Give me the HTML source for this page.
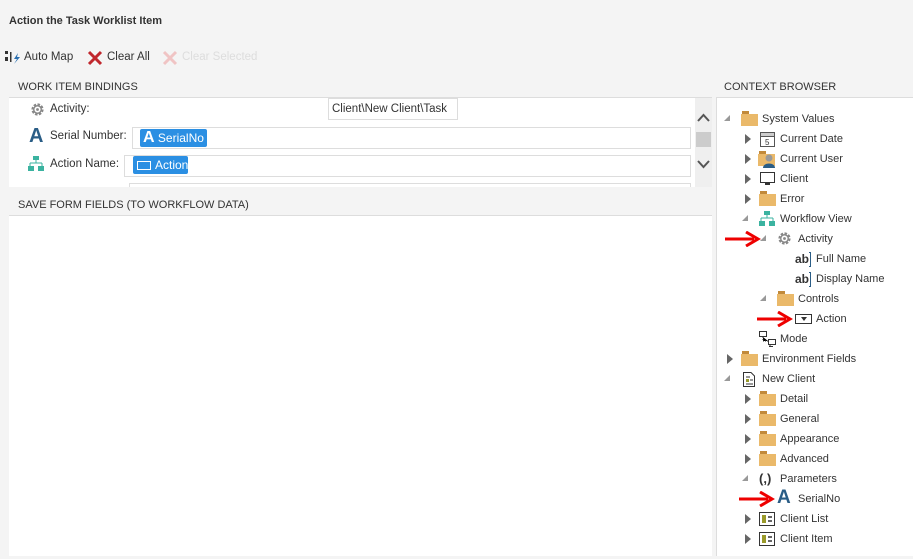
<!DOCTYPE html><html><head><style>
body{margin:0;width:913px;height:559px;background:#f4f4f4;font-family:"Liberation Sans",sans-serif;font-size:11px;color:#333;position:relative;overflow:hidden}
.a{position:absolute;white-space:nowrap}
.hd{font-size:11px;color:#333}
.row{position:absolute;height:20px;line-height:20px;white-space:nowrap;margin-top:1px}
.tri{position:absolute;width:0;height:0}
.tr{border-left:6px solid #666;border-top:5px solid transparent;border-bottom:5px solid transparent;top:5px}
.td{border-right:6px solid #999;border-top:6px solid transparent;top:6px}
.fold{position:absolute;top:2px;width:17px;height:15px}
.fold:before{content:"";position:absolute;left:1px;top:0;width:7px;height:3px;background:#c28a3a}
.fold:after{content:"";position:absolute;left:0;top:3px;width:17px;height:12px;background:#eab96a}
.box{position:absolute;background:#fff;border:1px solid #ddd}
.tag{position:absolute;background:#2b8fe3;color:#fff;border-radius:2px;height:18px;line-height:18px;font-size:12px}
</style></head><body>
<div class="a" style="left:9px;top:15px;font-weight:bold;font-size:11px;color:#333">Action the Task Worklist Item</div>
<svg class="a" style="left:5px;top:51px" width="16" height="14"><rect x="0" y="0" width="3" height="3" fill="#333"/><rect x="0" y="6" width="3" height="4" fill="#333"/><rect x="5" y="1" width="1.5" height="10" fill="#333"/><path d="M13 2 L9 8 L12 8 L9 13 L15 6 L12 6Z" fill="#2a6fb0"/></svg>
<div class="a" style="left:24px;top:51px;font-size:11.5px">Auto Map</div>
<svg class="a" style="left:87px;top:50px" width="16" height="16"><path d="M2 2L14 14M14 2L2 14" stroke="#c0272d" stroke-width="3"/></svg>
<div class="a" style="left:107px;top:51px;font-size:11.5px">Clear All</div>
<svg class="a" style="left:162px;top:50px" width="16" height="16"><path d="M2 2L14 14M14 2L2 14" stroke="#f0c4c4" stroke-width="3"/></svg>
<div class="a" style="left:182px;top:51px;font-size:11.5px;color:#ddd">Clear Selected</div>
<div class="a hd" style="left:18px;top:81px">WORK ITEM BINDINGS</div>
<div class="a hd" style="left:18px;top:199px">SAVE FORM FIELDS (TO WORKFLOW DATA)</div>
<div class="a hd" style="left:724px;top:81px">CONTEXT BROWSER</div>
<div class="a" style="left:9px;top:97px;width:703px;height:89px;background:#fff;border-top:1px solid #ddd;overflow:hidden">
 <svg class="a" style="left:21px;top:4px" width="15" height="15" viewBox="0 0 16 16"><circle cx="8" cy="8" r="5" fill="none" stroke="#888" stroke-width="3" stroke-dasharray="2.5 1.4"/><circle cx="8" cy="8" r="4" fill="none" stroke="#888" stroke-width="1.5"/><circle cx="8" cy="8" r="1.5" fill="#888"/></svg>
 <div class="a" style="left:41px;top:5px;font-size:11.5px">Activity:</div>
 <div class="box" style="left:319px;top:0;width:125px;height:20px;line-height:20px;padding-left:3px;font-size:11.5px">Client\New Client\Task</div>
 <div class="a" style="left:20px;top:27px;font-size:20px;font-weight:bold;color:#2a5d86">A</div>
 <div class="a" style="left:41px;top:32px;font-size:11.5px">Serial Number:</div>
 <div class="box" style="left:123px;top:29px;width:557px;height:20px"></div>
 <div class="tag" style="left:131px;top:31px;width:67px"><b style="font-size:16px;margin-left:3px">A</b> SerialNo</div>
 <svg class="a" style="left:19px;top:58px" width="16" height="16"><rect x="5" y="0" width="6" height="4" fill="#3bb3a0"/><path d="M8 4V7M2 7H14M2 7V10M14 7V10" stroke="#3bb3a0"/><rect x="0" y="10" width="6" height="5" fill="#3bb3a0"/><rect x="10" y="10" width="6" height="5" fill="#3bb3a0"/></svg>
 <div class="a" style="left:41px;top:60px;font-size:11.5px">Action Name:</div>
 <div class="box" style="left:115px;top:57px;width:565px;height:20px"></div>
 <div class="tag" style="left:124px;top:58px;width:55px"><span style="display:inline-block;width:12px;height:7px;border:1px solid #fff;margin:0 4px 0 4px;vertical-align:-1px"></span>Action</div>
 <div class="box" style="left:120px;top:85px;width:560px;height:20px"></div>
 <div class="a" style="left:686px;top:0;width:17px;height:89px;background:#efefef"></div>
 <svg class="a" style="left:688px;top:15px" width="13" height="9"><path d="M1 8L6.5 2L12 8" stroke="#555" stroke-width="2" fill="none"/></svg>
 <div class="a" style="left:687px;top:34px;width:15px;height:15px;background:#ccc"></div>
 <svg class="a" style="left:688px;top:62px" width="13" height="9"><path d="M1 1L6.5 7L12 1" stroke="#555" stroke-width="2" fill="none"/></svg>
</div>
<div class="a" style="left:9px;top:215px;width:703px;height:340px;background:#fff;border-top:1px solid #ddd"></div>
<div class="a" style="left:716px;top:97px;width:197px;height:458px;background:#fff;border-left:1px solid #ddd;border-top:1px solid #ddd"></div>
<div class="row" style="left:0;top:108px;width:913px">
 <div class="tri td" style="left:724px"></div><div class="fold" style="left:741px"></div><span class="a" style="left:762px">System Values</span></div>
<div class="row" style="left:0;top:128px;width:913px"><div class="tri tr" style="left:745px"></div>
 <svg class="a" style="left:760px;top:2px" width="15" height="16"><rect x="0.5" y="1.5" width="14" height="14" fill="#fff" stroke="#555"/><rect x="0.5" y="1.5" width="14" height="4" fill="#ccc" stroke="#555"/><text x="5" y="14" font-size="8" font-family="Liberation Sans" fill="#333">5</text></svg>
 <span class="a" style="left:780px">Current Date</span></div>
<div class="row" style="left:0;top:148px;width:913px"><div class="tri tr" style="left:745px"></div>
 <div class="fold" style="left:758px;width:12px"></div><svg class="a" style="left:763px;top:4px" width="12" height="15"><circle cx="6" cy="5" r="3.5" fill="#999"/><path d="M0 15C0 9 12 9 12 15Z" fill="#2a5d86"/></svg>
 <span class="a" style="left:780px">Current User</span></div>
<div class="row" style="left:0;top:168px;width:913px"><div class="tri tr" style="left:745px"></div>
 <svg class="a" style="left:760px;top:3px" width="15" height="14"><rect x="0.5" y="0.5" width="14" height="10" fill="none" stroke="#333"/><rect x="5" y="11" width="5" height="2" fill="#333"/></svg>
 <span class="a" style="left:780px">Client</span></div>
<div class="row" style="left:0;top:188px;width:913px"><div class="tri tr" style="left:745px"></div><div class="fold" style="left:759px;width:15px"></div><span class="a" style="left:780px">Error</span></div>
<div class="row" style="left:0;top:208px;width:913px"><div class="tri td" style="left:742px"></div>
 <svg class="a" style="left:759px;top:2px" width="16" height="16"><rect x="5" y="0" width="6" height="4" fill="#3bb3a0"/><path d="M8 4V7M2 7H14M2 7V10M14 7V10" stroke="#3bb3a0"/><rect x="0" y="10" width="6" height="5" fill="#3bb3a0"/><rect x="10" y="10" width="6" height="5" fill="#3bb3a0"/></svg>
 <span class="a" style="left:780px">Workflow View</span></div>
<div class="row" style="left:0;top:228px;width:913px"><div class="tri td" style="left:760px"></div>
 <svg class="a" style="left:777px;top:2px" width="15" height="15" viewBox="0 0 16 16"><circle cx="8" cy="8" r="5" fill="none" stroke="#888" stroke-width="3" stroke-dasharray="2.5 1.4"/><circle cx="8" cy="8" r="4" fill="none" stroke="#888" stroke-width="1.5"/><circle cx="8" cy="8" r="1.5" fill="#888"/></svg>
 <span class="a" style="left:798px">Activity</span></div>
<div class="row" style="left:0;top:248px;width:913px"><span class="a" style="left:795px;font-weight:bold;font-size:12px;color:#333">ab</span><span class="a" style="left:809px;top:3px;width:2px;height:13px;border:1px solid #2a5d86;border-left:none;border-right:none;background:linear-gradient(#2a5d86,#2a5d86) center/1px 100% no-repeat"></span><span class="a" style="left:816px">Full Name</span></div>
<div class="row" style="left:0;top:268px;width:913px"><span class="a" style="left:795px;font-weight:bold;font-size:12px;color:#333">ab</span><span class="a" style="left:809px;top:3px;width:2px;height:13px;border:1px solid #2a5d86;border-left:none;border-right:none;background:linear-gradient(#2a5d86,#2a5d86) center/1px 100% no-repeat"></span><span class="a" style="left:816px">Display Name</span></div>
<div class="row" style="left:0;top:288px;width:913px"><div class="tri td" style="left:760px"></div><div class="fold" style="left:777px;width:16px"></div><span class="a" style="left:798px">Controls</span></div>
<div class="row" style="left:0;top:308px;width:913px"><div class="a" style="left:795px;top:5px;width:15px;height:8px;border:1px solid #333"></div><div class="tri" style="left:801px;top:8px;border-top:4px solid #333;border-left:3px solid transparent;border-right:3px solid transparent"></div><span class="a" style="left:816px">Action</span></div>
<div class="row" style="left:0;top:328px;width:913px"><svg class="a" style="left:759px;top:2px" width="17" height="16"><rect x="0.5" y="0.5" width="7" height="5" fill="none" stroke="#333"/><rect x="9.5" y="8.5" width="7" height="5" fill="none" stroke="#333"/><path d="M4 6V10H9" stroke="#333" stroke-dasharray="1 1"/><path d="M11 14V16M10 15.5H14" stroke="#333"/></svg><span class="a" style="left:780px">Mode</span></div>
<div class="row" style="left:0;top:348px;width:913px"><div class="tri tr" style="left:727px"></div><div class="fold" style="left:741px"></div><span class="a" style="left:762px">Environment Fields</span></div>
<div class="row" style="left:0;top:368px;width:913px"><div class="tri td" style="left:724px"></div>
 <svg class="a" style="left:743px;top:3px" width="12" height="15"><path d="M0.5 0.5H8L11.5 4V14.5H0.5Z" fill="#fff" stroke="#333"/><rect x="3" y="7" width="3" height="3" fill="#9a9a2a"/><path d="M7 8H10M3 12H10M3 5H7" stroke="#333"/></svg>
 <span class="a" style="left:762px">New Client</span></div>
<div class="row" style="left:0;top:388px;width:913px"><div class="tri tr" style="left:745px"></div><div class="fold" style="left:759px"></div><span class="a" style="left:780px">Detail</span></div>
<div class="row" style="left:0;top:408px;width:913px"><div class="tri tr" style="left:745px"></div><div class="fold" style="left:759px"></div><span class="a" style="left:780px">General</span></div>
<div class="row" style="left:0;top:428px;width:913px"><div class="tri tr" style="left:745px"></div><div class="fold" style="left:759px"></div><span class="a" style="left:780px">Appearance</span></div>
<div class="row" style="left:0;top:448px;width:913px"><div class="tri tr" style="left:745px"></div><div class="fold" style="left:759px"></div><span class="a" style="left:780px">Advanced</span></div>
<div class="row" style="left:0;top:468px;width:913px"><div class="tri td" style="left:742px"></div><span class="a" style="left:759px;font-weight:bold;font-size:13px">(,)</span><span class="a" style="left:780px">Parameters</span></div>
<div class="row" style="left:0;top:488px;width:913px"><span class="a" style="left:777px;top:-1px;font-weight:bold;font-size:19px;color:#2a5d86">A</span><span class="a" style="left:798px">SerialNo</span></div>
<div class="row" style="left:0;top:508px;width:913px"><div class="tri tr" style="left:745px"></div><svg class="a" style="left:759px;top:3px" width="16" height="14"><rect x="0.5" y="0.5" width="15" height="13" fill="#fff" stroke="#333"/><rect x="3" y="3" width="4" height="8" fill="#9a9a2a"/><path d="M9 5H13M9 9H13" stroke="#333" stroke-width="1.5"/></svg><span class="a" style="left:780px">Client List</span></div>
<div class="row" style="left:0;top:528px;width:913px"><div class="tri tr" style="left:745px"></div><svg class="a" style="left:759px;top:3px" width="16" height="14"><rect x="0.5" y="0.5" width="15" height="13" fill="#fff" stroke="#333"/><rect x="3" y="3" width="4" height="8" fill="#9a9a2a"/><path d="M9 5H13M9 9H13" stroke="#333" stroke-width="1.5"/></svg><span class="a" style="left:780px">Client Item</span></div>
<svg class="a" style="left:724px;top:231px" width="38" height="16"><path d="M1 8H30M22 1L34 8L22 15" stroke="#e00" stroke-width="3" fill="none"/></svg>
<svg class="a" style="left:756px;top:311px" width="38" height="16"><path d="M1 8H30M22 1L34 8L22 15" stroke="#e00" stroke-width="3" fill="none"/></svg>
<svg class="a" style="left:738px;top:491px" width="38" height="16"><path d="M1 8H30M22 1L34 8L22 15" stroke="#e00" stroke-width="3" fill="none"/></svg>
</body></html>
